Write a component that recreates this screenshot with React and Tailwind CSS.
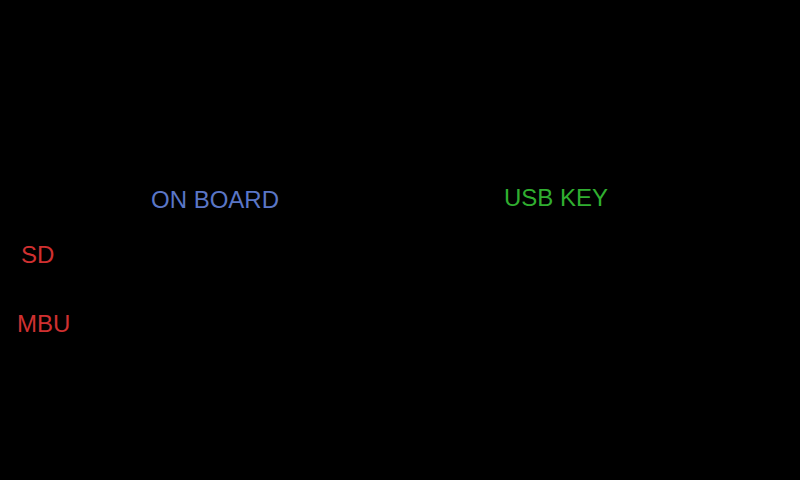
export default function App() {
  return (
    <div className="w-[800px] h-[480px] bg-black overflow-hidden pt-[186px] font-['Liberation_Sans',Arial,sans-serif] text-[24px] leading-[24px]">
      <div className="flex items-start pl-[151px]">
        <div className="w-[353px] mt-[2px] text-[#5a76c6]">ON BOARD</div>
        <div className="text-[#30ae30]">USB KEY</div>
      </div>
      <div className="mt-[31px] pl-[21px] text-[#d03030]">SD</div>
      <div className="mt-[45px] pl-[17px] text-[#d03030]">MBU</div>
    </div>
  )
}
